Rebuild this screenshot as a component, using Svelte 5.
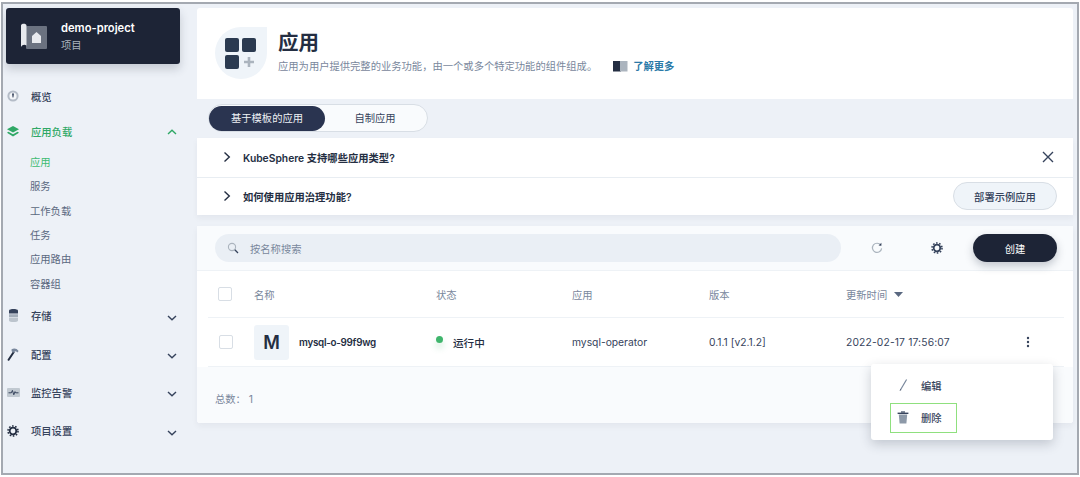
<script lang="ts">
  const subItems = ["应用", "服务", "工作负载", "任务", "应用路由", "容器组"];
  const bottomItems = [
    { key: "store", label: "存储" },
    { key: "config", label: "配置" },
    { key: "monitor", label: "监控告警" },
    { key: "settings", label: "项目设置" }
  ];
</script>

{#snippet chevron(open: boolean)}
  <svg class="chev" width="10" height="6" viewBox="0 0 10 6">
    <path d={open ? "M1 5L5 1.2L9 5" : "M1 1L5 4.8L9 1"} fill="none" stroke="currentColor" stroke-width="1.4" />
  </svg>
{/snippet}

{#snippet gear(size: number, color: string)}
  <svg width={size} height={size} viewBox="0 0 12 12">
    <circle cx="6" cy="6" r="3.3" fill="none" stroke={color} stroke-width="1.8" />
    <circle cx="6" cy="6" r="5" fill="none" stroke={color} stroke-width="1.6" stroke-dasharray="1.6 1.54" />
  </svg>
{/snippet}

{#snippet navIcon(key: string)}
  {#if key === "store"}
    <svg width="9" height="13" viewBox="0 0 9 13">
      <path d="M0 1.6C0 -.4 9 -.4 9 1.6V4.6H0Z" fill="#36435c" />
      <path d="M0 5.2H9V8.2H0Z" fill="#a4aeba" />
      <path d="M0 8.8H9V11.4C9 13.4 0 13.4 0 11.4Z" fill="#bcc4cd" />
    </svg>
  {:else if key === "config"}
    <svg width="13" height="14" viewBox="0 0 13 14">
      <path d="M1.6 12.8L6.6 5.2" stroke="#242e42" stroke-width="2" stroke-linecap="round" />
      <path d="M4.4 2.4C6.8 .8 9.6 1 11.6 4L10.4 5.6C9.4 4.4 8.4 4 7.4 4.4L6.6 5.8L4.8 4.6Z" fill="#79879c" />
    </svg>
  {:else if key === "monitor"}
    <svg width="13" height="9" viewBox="0 0 13 9">
      <rect width="13" height="9" rx="1" fill="#c1c9d1" />
      <path d="M1.5 4.8H4.4L5.4 2.4L6.8 6.8L8 3.6L8.6 4.8H11.5" fill="none" stroke="#36435c" stroke-width="1" />
    </svg>
  {:else}
    {@render gear(12, "#242e42")}
  {/if}
{/snippet}

<div class="frame">
  <aside class="sidebar">
    <div class="project">
      <svg class="project-icon" width="28" height="27" viewBox="0 0 28 27">
        <rect x="6" y="3" width="21" height="23" rx="1" fill="#6b7280" />
        <path d="M1 2.5C1 .2 6.5 .2 6.5 2.5V22.5C4 21.2 2.4 22 1 24Z" fill="#e8eaee" />
        <path d="M12 20V13L16.5 9L21 13V20Z" fill="#e8eaee" />
      </svg>
      <div>
        <div class="project-name">demo-project</div>
        <div class="project-sub">项目</div>
      </div>
    </div>

    <nav>
      <div class="nav-row short">
        <span class="nav-icon">
          <svg width="12" height="12" viewBox="0 0 12 12">
            <circle cx="6" cy="6" r="5.6" fill="#b4bcc7" />
            <circle cx="6" cy="6" r="3.6" fill="#f4f6f9" />
            <path d="M5 3.6H7L6.4 7.4H5.6Z" fill="#36435c" />
          </svg>
        </span>
        <span>概览</span>
      </div>
      <div class="nav-row short active">
        <span class="nav-icon">
          <svg width="12" height="11" viewBox="0 0 12 11">
            <path d="M6 0L12 3.2L6 6.4L0 3.2Z" fill="#2fa866" />
            <path d="M1.4 5.8L6 8.2L10.6 5.8L12 6.8L6 10.4L0 6.8Z" fill="#2fa866" />
          </svg>
        </span>
        <span>应用负载</span>
        {@render chevron(true)}
      </div>
      <div class="subs">
        {#each subItems as item, i}
          <div class="sub-row" class:current={i === 0}>{item}</div>
        {/each}
      </div>
      {#each bottomItems as item}
        <div class="nav-row">
          <span class="nav-icon">{@render navIcon(item.key)}</span>
          <span>{item.label}</span>
          {@render chevron(false)}
        </div>
      {/each}
    </nav>
  </aside>

  <main>
    <header class="page-head">
      <div class="blob">
        <span class="sq"></span>
        <span class="sq"></span>
        <span class="sq"></span>
        <svg width="14" height="14" viewBox="0 0 14 14"><path d="M7 2V12M2 7H12" stroke="#abb4be" stroke-width="2.6" /></svg>
      </div>
      <div class="head-text">
        <h1>应用</h1>
        <p>
          <span>应用为用户提供完整的业务功能，由一个或多个特定功能的组件组成。</span>
          <svg class="book" width="16" height="12" viewBox="0 0 16 12">
            <rect x="1" y="1" width="8" height="10.5" fill="#242e42" />
            <rect x="8" y="1" width="7.5" height="10.5" fill="#abb4be" />
          </svg>
          <a href="#more">了解更多</a>
        </p>
      </div>
    </header>

    <div class="tab-band">
      <div class="tabs">
        <span class="tab on">基于模板的应用</span>
        <span class="tab">自制应用</span>
      </div>
    </div>

    <section class="tips">
      <div class="tip">
        <svg width="8" height="12" viewBox="0 0 8 12"><path d="M1.5 1.5L6.3 6L1.5 10.5" fill="none" stroke="#242e42" stroke-width="1.4" /></svg>
        <b>KubeSphere 支持哪些应用类型?</b>
        <svg class="close" width="12" height="12" viewBox="0 0 12 12"><path d="M1 1L11 11M11 1L1 11" stroke="#36435c" stroke-width="1.4" /></svg>
      </div>
      <div class="tip">
        <svg width="8" height="12" viewBox="0 0 8 12"><path d="M1.5 1.5L6.3 6L1.5 10.5" fill="none" stroke="#242e42" stroke-width="1.4" /></svg>
        <b>如何使用应用治理功能?</b>
        <button class="ghost" type="button">部署示例应用</button>
      </div>
    </section>

    <section class="panel">
      <div class="toolbar">
        <div class="search">
          <svg width="12" height="12" viewBox="0 0 12 12">
            <circle cx="5" cy="5" r="3.6" fill="none" stroke="#abb4be" stroke-width="1.1" />
            <path d="M7.8 7.8L11 11" stroke="#36435c" stroke-width="1.3" />
          </svg>
          <span>按名称搜索</span>
        </div>
        <svg class="refresh" width="12" height="12" viewBox="0 0 12 12">
          <path d="M9.8 3.2A4.6 4.6 0 1 0 10.6 6.4" fill="none" stroke="#abb4be" stroke-width="1.2" />
          <path d="M7.6 3.6L10.4 .8V3.8Z" fill="#36435c" />
        </svg>
        <span class="tool-gear">{@render gear(12, "#36435c")}</span>
        <button class="create" type="button">创建</button>
      </div>

      <div class="row head">
        <span class="check"></span>
        <span>名称</span>
        <span>状态</span>
        <span>应用</span>
        <span>版本</span>
        <span class="sort">更新时间
          <svg width="9" height="5" viewBox="0 0 9 5"><path d="M0 0H9L4.5 5Z" fill="#5a6880" /></svg>
        </span>
      </div>

      <div class="row item">
        <span class="check"></span>
        <span class="name">
          <span class="avatar">M</span>
          <b>mysql-o-99f9wg</b>
        </span>
        <span class="status"><i></i>运行中</span>
        <span>mysql-operator</span>
        <span>0.1.1 [v2.1.2]</span>
        <span class="time">
          2022-02-17 17:56:07
          <svg class="dots" width="4" height="12" viewBox="0 0 4 12">
            <circle cx="2" cy="2" r="1.2" fill="#36435c" />
            <circle cx="2" cy="6" r="1.2" fill="#36435c" />
            <circle cx="2" cy="10" r="1.2" fill="#36435c" />
          </svg>
        </span>
      </div>

      <div class="foot">总数： 1</div>

      <div class="menu">
        <div class="menu-item">
          <svg width="12" height="14" viewBox="0 0 12 14"><path d="M9.6 1.5L3.4 12" stroke="#79879c" stroke-width="1.2" /><path d="M3.6 11.2L2.4 13L4.4 12Z" fill="#36435c" /></svg>
          <span>编辑</span>
        </div>
        <div class="menu-item marked">
          <svg width="12" height="13" viewBox="0 0 12 13">
            <path d="M0.6 1.6H11.4V3H0.6Z" fill="#36435c" />
            <path d="M4 .4H8V1.6H4Z" fill="#36435c" />
            <path d="M1.8 3.4H10.2L9.4 12.6H2.6Z" fill="#8d99a8" />
          </svg>
          <span>删除</span>
        </div>
      </div>
    </section>
  </main>
</div>

<style>
  :global(body) { margin: 0; background: #fff; }
  .frame {
    box-sizing: border-box; width: 1078px; height: 473px; margin: 2px 0 0 1px;
    border: 2px solid #a4a9b1; background: #edf1f7; display: flex; overflow: hidden;
    font-family: Inter, "Noto Sans CJK SC", sans-serif; font-size: 10.3px; color: #36435c;
  }

  .sidebar { width: 194px; flex: none; padding: 4px 0 0 3px; box-sizing: border-box; }
  .project {
    width: 174px; height: 56px; box-sizing: border-box; background: #1d2436; border-radius: 3px;
    display: flex; align-items: center; padding-left: 14px; gap: 13px;
    box-shadow: 0 5px 10px rgba(36, 46, 66, 0.2);
  }
  .project-icon { margin-top: 1px; }
  .project-name { color: #fff; font-weight: 600; font-size: 11.2px; line-height: 16px; }
  .project-sub { color: #abb4be; line-height: 15px; margin-top: 2px; }

  nav { padding-top: 14.5px; position: relative; left: -3px; width: 177px; }
  .nav-row {
    height: 38.3px; display: flex; align-items: center; position: relative; padding-left: 28px;
    font-weight: 500; color: #36435c;
  }
  .nav-row.short { height: 35px; }
  .nav-row.active { color: #2fa866; }
  .nav-icon { position: absolute; left: 0; width: 20px; display: flex; justify-content: center; }
  .chev { position: absolute; left: 164px; top: 18px; color: #36435c; }
  .active .chev { color: #2fa866; top: 15px; }
  .subs { padding: 1.4px 0 0.6px; }
  .sub-row { height: 24.4px; line-height: 24.4px; padding-left: 27px; color: #5a6880; }
  .sub-row.current { color: #3dbb72; }

  main { flex: none; width: 876px; padding-top: 4px; }

  .page-head {
    height: 91px; background: #fff; border-radius: 3px 3px 0 0; display: flex;
    padding: 19px 0 0 18px; box-sizing: border-box; gap: 11px;
  }
  .blob {
    width: 52px; height: 52px; background: #eff4f9; border-radius: 50% 0 50% 50%; box-sizing: border-box;
    padding: 11px 0 0 10px; display: grid; grid-template-columns: 14px 14px; grid-auto-rows: 14px; gap: 3px;
  }
  .sq { background: #2b3a50; border-radius: 2px; }
  .head-text h1 { margin: 1px 0 0; font-size: 20.5px; line-height: 30px; font-weight: 700; color: #242e42; }
  .head-text p { margin: 0; display: flex; align-items: center; color: #79879c; line-height: 16px; }
  .book { margin-left: 15px; }
  .head-text a { margin-left: 5px; color: #2b7aa8; font-weight: 700; text-decoration: none; }

  .tab-band { height: 39px; box-sizing: border-box; padding: 5px 0 0 11px; }
  .tabs {
    width: 220px; height: 28px; box-sizing: border-box; border: 1px solid #d8dee5; border-radius: 14px;
    background: #f9fbfd; display: flex; align-items: center;
  }
  .tab { height: 25px; line-height: 25px; text-align: center; width: 116px; border-radius: 13px; color: #36435c; }
  .tab + .tab { width: 100px; }
  .tab.on { background: #2a3450; color: #eef1f5; }

  .tips { background: #fff; box-shadow: 0 3px 6px rgba(36, 46, 66, 0.05); }
  .tip { height: 38.5px; box-sizing: border-box; display: flex; align-items: center; padding: 0 16px 0 26px; gap: 12px; color: #242e42; }
  .tip + .tip { border-top: 1px solid #e8edf2; }
  .tip b { font-weight: 600; flex: 1; }
  .close { margin-right: 3px; }
  .ghost {
    width: 104px; height: 28px; border: 1px solid #d8dee5; border-radius: 14px; background: #eff4f9;
    font: inherit; color: #36435c; padding: 0; font-weight: 500;
  }

  .panel { position: relative; margin-top: 11px; border-radius: 0 0 3px 3px; background: #fff; box-shadow: 0 3px 6px rgba(36, 46, 66, 0.05); }
  .toolbar { height: 45px; box-sizing: border-box; background: #f9fbfd; display: flex; align-items: center; padding: 0 16px 0 18px; border-bottom: 1px solid #eef2f6; }
  .search {
    width: 626px; height: 28px; background: #eaeff5; border-radius: 14px; display: flex; align-items: center;
    padding-left: 12px; box-sizing: border-box; gap: 11px; color: #79879c;
  }
  .refresh { margin-left: 30px; }
  .tool-gear { margin-left: 48px; display: flex; }
  .create {
    margin-left: 30px; width: 84px; height: 28px; background: #1d2436; color: #fff; border: 0; border-radius: 14px;
    font: inherit; padding: 0; box-shadow: 0 4px 8px rgba(36, 46, 66, 0.25);
  }

  .row {
    display: grid; grid-template-columns: 36px 182px 136px 137px 137px 1fr; align-items: center;
    margin: 0 9px 0 11px; padding-left: 10px;
    border-bottom: 1px solid #eef2f6; box-sizing: border-box;
  }
  .row.head { height: 47px; color: #79879c; }
  .row.item { height: 49px; color: #36435c; }
  .check { width: 14px; height: 14px; box-sizing: border-box; border: 1.5px solid #d8dee5; border-radius: 2px; background: #fff; }
  .item .check { margin-left: 1px; }
  .sort { display: flex; align-items: center; gap: 7px; }
  .name { display: flex; align-items: center; gap: 10px; color: #242e42; }
  .name b { font-weight: 600; font-size: 9.8px; letter-spacing: -0.25px; }
  .avatar {
    width: 35px; height: 35px; background: #eff4f9; border-radius: 3px; text-align: center; line-height: 35px;
    font-size: 18px; font-weight: 600; color: #242e42;
  }
  .status { display: flex; align-items: center; color: #242e42; font-weight: 500; font-size: 10.6px; }
  .status i {
    width: 7px; height: 7px; border-radius: 50%; background: #3fb56c; margin: -5px 10px 0 0;
    box-shadow: 0 5px 6px rgba(63, 181, 108, 0.25);
  }
  .time { display: flex; align-items: center; justify-content: space-between; padding-right: 34px; white-space: nowrap; letter-spacing: 0.15px; }
  .foot { height: 56px; box-sizing: border-box; background: #f9fbfd; padding: 24px 0 0 18px; color: #79879c; line-height: 16px; border-radius: 0 0 3px 3px; }

  .menu {
    position: absolute; left: 674px; top: 138px; width: 182px; height: 76px; box-sizing: border-box; background: #fff;
    border-radius: 3px; box-shadow: 0 4px 12px rgba(36, 46, 66, 0.22); padding: 6px 0 0 19px;
  }
  .menu-item { height: 30px; width: 67px; box-sizing: border-box; display: flex; align-items: center; padding-left: 7px; gap: 12px; color: #36435c; font-weight: 500; }
  .menu-item.marked { border: 1.5px solid #8fe07e; margin-top: 3px; padding: 0 0 2px 6px; }
</style>
